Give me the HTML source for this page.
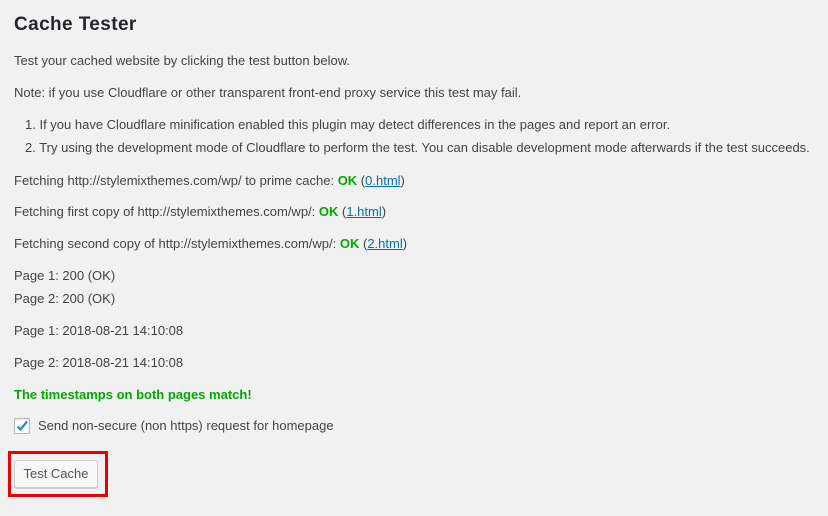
<!DOCTYPE html>
<html><head><style>
body{margin:0;width:828px;height:516px;background:#f1f1f1;font-family:"Liberation Sans",sans-serif;font-size:13px;color:#444;position:relative;overflow:hidden}
.l{position:absolute;left:14px;white-space:nowrap;line-height:16px}
h1{position:absolute;left:14px;top:14px;margin:0;font-size:19px;font-weight:bold;color:#23282d;line-height:22px;letter-spacing:0.4px}
.ok{color:#0a0;font-weight:bold}
a{color:#0073aa;text-decoration:underline}
.box{position:absolute;left:8px;top:451px;width:94px;height:40px;border:3px solid #e00}
.btn{position:absolute;left:14px;top:460px;width:82px;height:26px;border:1px solid #ccc;border-radius:3px;background:#f7f7f7;box-shadow:0 1px 0 #ccc;font-size:13px;color:#555;text-align:center;line-height:26px}
.cb{position:absolute;left:14px;top:418px;width:14px;height:14px;border:1px solid #b4b9be;background:#fff;box-shadow:inset 0 1px 2px rgba(0,0,0,.1)}
</style></head><body>
<h1>Cache Tester</h1>
<div class="l" style="top:53px">Test your cached website by clicking the test button below.</div>
<div class="l" style="top:85px">Note: if you use Cloudflare or other transparent front-end proxy service this test may fail.</div>
<div class="l" style="top:117px;left:25px">1. If you have Cloudflare minification enabled this plugin may detect differences in the pages and report an error.</div>
<div class="l" style="top:140px;left:25px">2. Try using the development mode of Cloudflare to perform the test. You can disable development mode afterwards if the test succeeds.</div>
<div class="l" style="top:173px">Fetching http://stylemixthemes.com/wp/ to prime cache: <span class="ok">OK</span> (<a>0.html</a>)</div>
<div class="l" style="top:204px">Fetching first copy of http://stylemixthemes.com/wp/: <span class="ok">OK</span> (<a>1.html</a>)</div>
<div class="l" style="top:236px">Fetching second copy of http://stylemixthemes.com/wp/: <span class="ok">OK</span> (<a>2.html</a>)</div>
<div class="l" style="top:268px">Page 1: 200 (OK)</div>
<div class="l" style="top:291px">Page 2: 200 (OK)</div>
<div class="l" style="top:323px">Page 1: 2018-08-21 14:10:08</div>
<div class="l" style="top:355px">Page 2: 2018-08-21 14:10:08</div>
<div class="l ok" style="top:387px">The timestamps on both pages match!</div>
<div class="cb"><svg width="14" height="14" viewBox="0 0 14 14"><path d="M2.5 7.5 L5.5 10.5 L12 2.5" stroke="#1e8cbe" stroke-width="2.2" fill="none"/></svg></div>
<div class="l" style="top:418px;left:38px">Send non-secure (non https) request for homepage</div>
<div class="box"></div>
<div class="btn">Test Cache</div>
</body></html>
